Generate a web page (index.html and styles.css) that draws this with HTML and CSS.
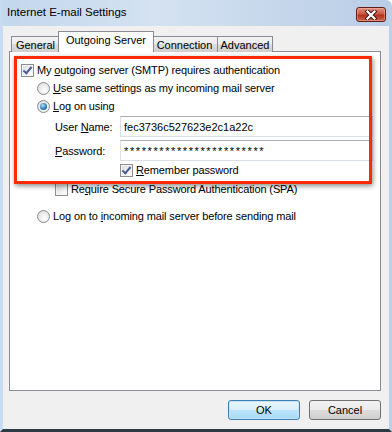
FILE: index.html
```html
<!doctype html>
<html lang="en">
<head>
    <meta charset="UTF-8">
    <title>Internet E-mail Settings</title>
    <link rel="stylesheet" href="styles.css">
</head>
<body>
    <div class="window">
        <div class="titlebar">
            <span class="title">Internet E-mail Settings</span>
            <div class="close">
                <svg width="14" height="10" viewBox="0 0 14 10">
                    <path d="M3.5 1.5 L10.5 8.5 M10.5 1.5 L3.5 8.5" stroke="#3b1410" stroke-width="4" stroke-linecap="square"/>
                    <path d="M3.5 1.5 L10.5 8.5 M10.5 1.5 L3.5 8.5" stroke="#ffffff" stroke-width="2.2" stroke-linecap="square"/>
                </svg>
            </div>
        </div>
        <div class="client">
            <div class="tabs">
                <div class="tab tab-general">General</div>
                <div class="tab active">Outgoing Server</div>
                <div class="tab tab-conn">Connection</div>
                <div class="tab tab-adv">Advanced</div>
            </div>
            <div class="panel">
                <div class="row row-auth">
                    <span class="check on"></span>
                    <span>My <u>o</u>utgoing server (SMTP) requires authentication</span>
                </div>
                <div class="row row-radio">
                    <span class="radio"></span>
                    <span><u>U</u>se same settings as my incoming mail server</span>
                </div>
                <div class="row row-radio">
                    <span class="radio on"></span>
                    <span><u>L</u>og on using</span>
                </div>
                <div class="field field-user">
                    <label class="field-label">User <u>N</u>ame:</label>
                    <input class="text" type="text" value="fec3736c527623e2c1a22c" readonly>
                </div>
                <div class="field field-pass">
                    <label class="field-label"><u>P</u>assword:</label>
                    <input class="text pass" type="text" value="************************" readonly>
                </div>
                <div class="row row-remember">
                    <span class="check on"></span>
                    <span><u>R</u>emember password</span>
                </div>
                <div class="row row-spa">
                    <span class="check"></span>
                    <span>Re<u>q</u>uire Secure Password Authentication (SPA)</span>
                </div>
                <div class="row row-radio row-incoming">
                    <span class="radio"></span>
                    <span>Log on to <u>i</u>ncoming mail server before sending mail</span>
                </div>
                <div class="highlight"></div>
            </div>
            <div class="buttons">
                <button class="btn default">OK</button>
                <button class="btn">Cancel</button>
            </div>
        </div>
    </div>
</body>
</html>
```

FILE: styles.css
```css
body {
    margin: 0;
    background: #ffffff;
}
.window {
    width: 392px;
    height: 432px;
    box-sizing: border-box;
    display: flex;
    flex-direction: column;
    background: linear-gradient(to right, #c3d7ed, #d4e2f1 40%, #b9cde6);
    border-left: 3px solid #c8dcf1;
    border-right: 3px solid #bcd1e8;
    border-bottom: 3px solid #2e3a44;
    border-top-right-radius: 6px;
    box-shadow: inset 0 -1px 0 #5fc1ea;
}
.titlebar {
    height: 26px;
    flex: none;
    display: flex;
    justify-content: space-between;
    align-items: flex-start;
    padding: 0 3px 0 4px;
}
.title {
    font-family: "Liberation Sans", Arial, sans-serif;
    font-size: 11.5px;
    color: #000;
    margin-top: 6px;
}
.close {
    margin-top: 7px;
    width: 30px;
    height: 15px;
    flex: none;
    box-sizing: border-box;
    border: 1px solid #5e1f17;
    border-radius: 3px;
    background: linear-gradient(to bottom, #e0917f, #c95a45 45%, #b2321d 55%, #cc644c);
    box-shadow: inset 0 0 0 1px rgba(255, 190, 175, 0.45);
    display: flex;
    align-items: center;
    justify-content: center;
}
.client {
    flex: 1;
    background: #f0f0f0;
    padding: 6px 8px 0 6px;
    font-family: "Liberation Sans", Arial, sans-serif;
    font-size: 11px;
    color: #000;
}
.tabs {
    height: 20px;
    display: flex;
    align-items: flex-end;
    padding-left: 2px;
    margin-bottom: -1px;
    position: relative;
    z-index: 1;
}
.tab {
    height: 16px;
    box-sizing: border-box;
    border: 1px solid #898c95;
    border-bottom: none;
    border-left: none;
    padding-top: 1px;
    background: linear-gradient(to bottom, #f3f3f3, #ebebeb 50%, #dddddd 50%, #cfcfcf);
    display: flex;
    align-items: center;
    justify-content: center;
}
.tab-general {
    width: 49px;
    border-left: 1px solid #898c95;
}
.tab-conn {
    width: 66px;
}
.tab-adv {
    width: 55px;
}
.tab.active {
    width: 96px;
    height: 21px;
    background: #ffffff;
    border-left: 1px solid #898c95;
    margin: 0 -2px 0 -2px;
    padding: 0 0 4px;
    position: relative;
}
.panel {
    height: 340px;
    box-sizing: border-box;
    border: 1px solid #898c95;
    background: #ffffff;
    position: relative;
    padding-top: 9px;
    letter-spacing: -0.12px;
}
.row {
    height: 18px;
    display: flex;
    align-items: center;
    gap: 3px;
}
.row-auth {
    padding-left: 11px;
}
.row-radio {
    padding-left: 27px;
}
.row-remember {
    padding-left: 110px;
}
.row-spa {
    padding-left: 45px;
    margin-top: 1px;
}
.row-incoming {
    margin-top: 9px;
}
.field {
    height: 21px;
    display: flex;
    align-items: center;
    padding-left: 45px;
}
.field-user {
    margin-top: 1px;
}
.field-pass {
    margin-top: 3px;
}
.field-label {
    width: 65px;
}
.text {
    width: 253px;
    height: 21px;
    box-sizing: border-box;
    margin: 0;
    padding: 0 3px;
    border: 1px solid #abadb3;
    border-color: #abadb3 #e3e9ef #dbdfe6 #dbdfe6;
    font-family: "Liberation Sans", Arial, sans-serif;
    font-size: 11px;
    color: #000;
    outline: none;
}
.pass {
    letter-spacing: 1.6px;
}
.check {
    width: 13px;
    height: 13px;
    box-sizing: border-box;
    border: 1px solid #8e8f8f;
    background: linear-gradient(135deg, #dcdcdc, #ffffff);
    box-shadow: inset 0 0 0 1px #f4f4f4;
    flex: none;
    position: relative;
}
.check.on::after {
    content: "";
    position: absolute;
    left: 3px;
    top: 0px;
    width: 3px;
    height: 7px;
    border: solid #4a5d95;
    border-width: 0 2px 2px 0;
    transform: rotate(40deg);
}
.radio {
    width: 13px;
    height: 13px;
    box-sizing: border-box;
    border: 1px solid #8a8b8b;
    border-radius: 50%;
    background: radial-gradient(circle at 60% 65%, #ffffff, #d6d6d6);
    flex: none;
    position: relative;
}
.radio.on::after {
    content: "";
    position: absolute;
    left: 2px;
    top: 2px;
    width: 7px;
    height: 7px;
    border-radius: 50%;
    background: radial-gradient(circle at 40% 35%, #b9e2f7, #2c7fc0 55%, #1a4f86);
}
.highlight {
    position: absolute;
    left: 4px;
    top: 4px;
    width: 358px;
    height: 128px;
    box-sizing: border-box;
    border: 3px solid #ff2a00;
    box-shadow: 1px 2px 5px rgba(0, 0, 0, 0.45);
}
.buttons {
    display: flex;
    justify-content: flex-end;
    gap: 9px;
    margin-top: 9px;
}
.btn {
    width: 72px;
    height: 20px;
    box-sizing: border-box;
    border: 1px solid #707070;
    border-radius: 3px;
    background: linear-gradient(to bottom, #f2f2f2, #ebebeb 50%, #dddddd 50%, #cfcfcf);
    font-family: "Liberation Sans", Arial, sans-serif;
    font-size: 11px;
    color: #000;
    padding: 0;
}
.btn.default {
    border-color: #3c7fb1;
    background: linear-gradient(to bottom, #eaf6fd, #d9f0fc 50%, #bee6fd 50%, #a7d9f5);
    box-shadow: inset 0 0 0 1px #c2e4f6;
}
```
